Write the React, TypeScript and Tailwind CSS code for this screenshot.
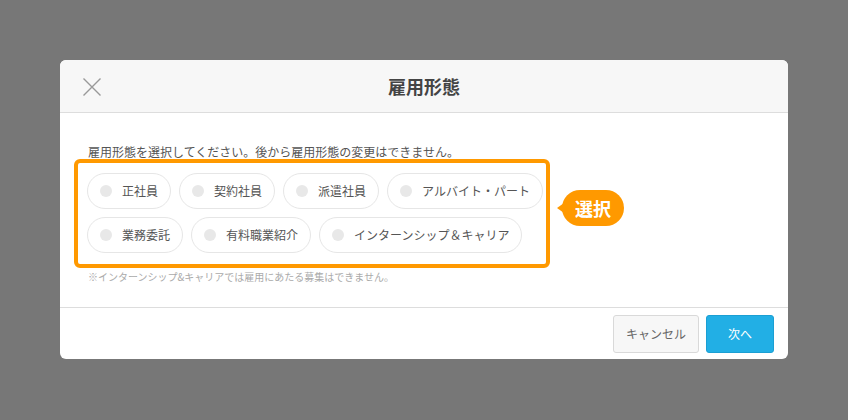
const types = [
  ["正社員", "契約社員", "派遣社員", "アルバイト・パート"],
  ["業務委託", "有料職業紹介", "インターンシップ＆キャリア"],
];

function Pill({ label }: { label: string }) {
  return (
    <div className="flex h-[36px] shrink-0 items-center whitespace-nowrap rounded-full border border-[#e6e6e6] bg-white pl-[12px] pr-[12px]">
      <span className="h-[12px] w-[12px] shrink-0 rounded-full bg-[#e8e8e8]" />
      <span className="ml-[10px] text-[12px] leading-none text-[#555]">{label}</span>
    </div>
  );
}

export default function App() {
  return (
    <div
      className="flex h-[420px] w-[848px] items-start bg-[#777777] pl-[60px] pt-[60px]"
      style={{ fontFamily: '"Noto Sans CJK JP", "Noto Sans", sans-serif' }}
    >
      <div className="w-[728px] overflow-visible rounded-[6px] bg-white">
        {/* header */}
        <div className="relative flex h-[53px] items-center justify-center rounded-t-[6px] border-b border-[#dddddd] bg-[#f7f7f7]">
          <button className="absolute left-[22px] top-[17px] h-[20px] w-[20px]">
            <svg viewBox="0 0 20 20" className="h-[20px] w-[20px]">
              <path d="M1.5 1.5 L18.5 18.5 M18.5 1.5 L1.5 18.5" stroke="#999" strokeWidth="1.4" fill="none" />
            </svg>
          </button>
          <h1 className="text-[18px] font-bold text-[#444]">雇用形態</h1>
        </div>

        {/* body */}
        <div className="h-[194px] pt-[32px]">
          <p className="pl-[28px] text-[12px] leading-[14px] text-[#555]">
            雇用形態を選択してください。後から雇用形態の変更はできません。
          </p>
          <div className="relative ml-[14px] w-[476px] rounded-[6px] border-4 border-[#ff9900] pb-[11px] pl-[9px] pt-[10px]">
            <div className="flex flex-col gap-[8px]">
              {types.map((row, i) => (
                <div key={i} className="flex gap-[8px]">
                  {row.map((t) => (
                    <Pill key={t} label={t} />
                  ))}
                </div>
              ))}
            </div>
            <div className="absolute left-[484px] top-[27px] flex h-[36px] w-[62px] items-center justify-center rounded-full bg-[#ff9900]">
              <span className="absolute left-[-5px] top-[13px] h-0 w-0 border-y-[5px] border-r-[7px] border-y-transparent border-r-[#ff9900]" />
              <span className="text-[18px] font-bold leading-none text-white">選択</span>
            </div>
          </div>
          <p className="mt-[3px] pl-[28px] text-[10px] leading-[12px] text-[#aaa]">
            ※インターンシップ&キャリアでは雇用にあたる募集はできません。
          </p>
        </div>

        {/* footer */}
        <div className="flex justify-end gap-[7px] border-t border-[#dddddd] pb-[6px] pr-[14px] pt-[7px]">
          <button className="h-[38px] w-[86px] rounded-[3px] border border-[#d9d9d9] bg-[#f7f7f7] text-[12px] text-[#666]">
            キャンセル
          </button>
          <button className="h-[38px] w-[68px] rounded-[3px] border border-[#1b9fd3] bg-[#22afe5] text-[12px] text-white">
            次へ
          </button>
        </div>
      </div>
    </div>
  );
}
